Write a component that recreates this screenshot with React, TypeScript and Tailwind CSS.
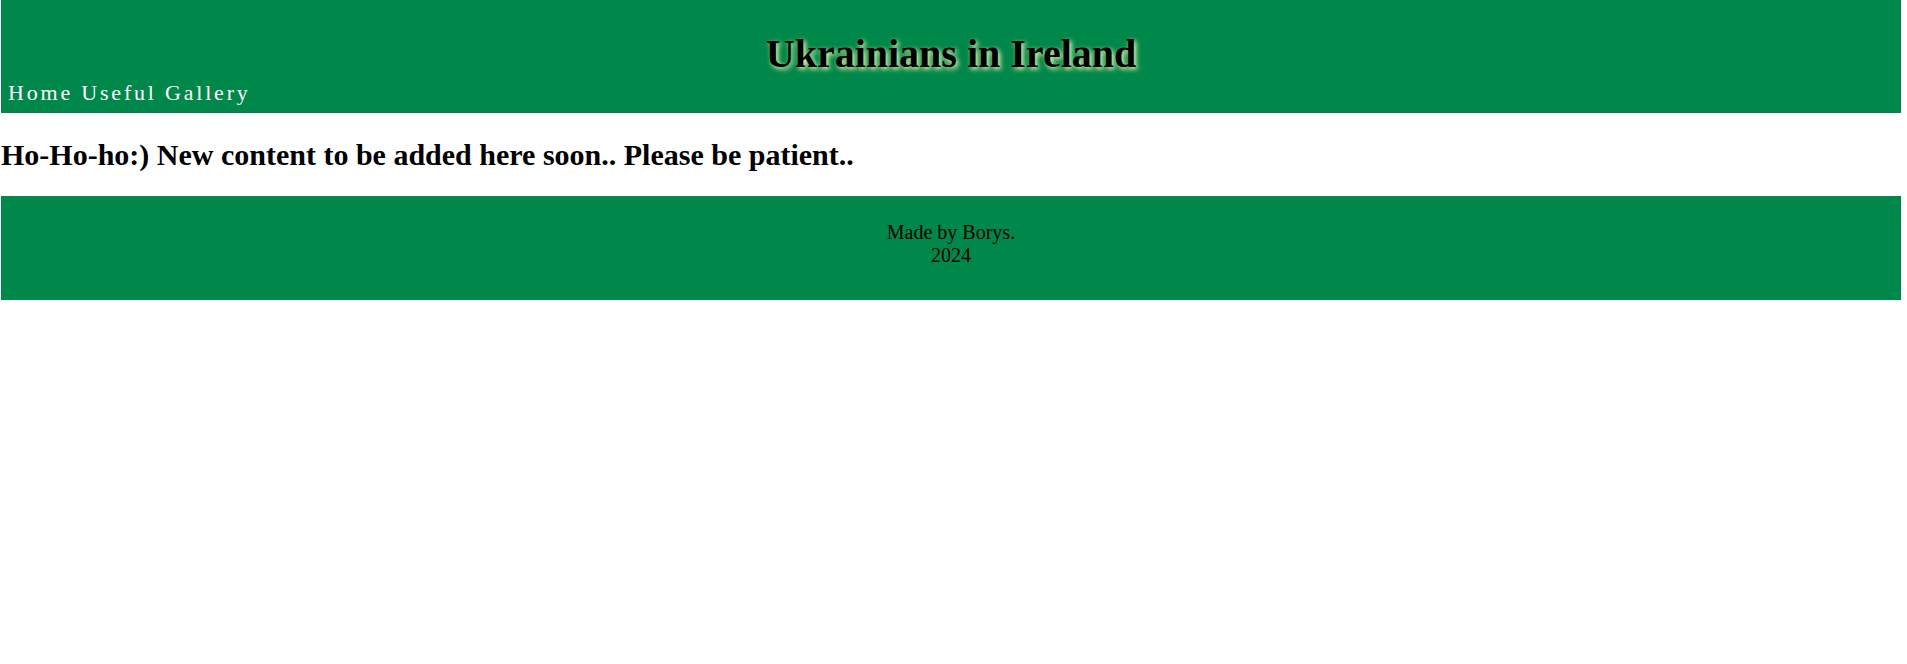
export default function App() {
  const serif = { fontFamily: '"Liberation Serif", "Times New Roman", serif' };
  return (
    <div className="min-h-screen w-full bg-white text-black" style={serif}>
      <header className="ml-[1px] w-[1900px] h-[113px] bg-[#00874a] flex flex-col">
        <h1 className="pt-[31px] text-center text-[40px] leading-[46px] font-bold text-black [text-shadow:2px_2px_5px_#ffffb0]">
          Ukrainians in Ireland
        </h1>
        <nav className="mt-[4px] pl-[7px] text-[22px] leading-[24px] tracking-[2.8px] text-white">
          <a href="#">Home</a> <a href="#">Useful</a> <a href="#">Gallery</a>
        </nav>
      </header>
      <main className="ml-[1px]">
        <h2 className="pt-[24px] text-[30px] leading-[35px] font-bold">
          Ho-Ho-ho:) New content to be added here soon.. Please be patient..
        </h2>
      </main>
      <footer className="mt-[24px] ml-[1px] w-[1900px] h-[104px] bg-[#00874a] pt-[25px] flex flex-col items-center text-[20px] leading-[23px] text-black">
        <p>Made by Borys.</p>
        <p>2024</p>
      </footer>
    </div>
  );
}
